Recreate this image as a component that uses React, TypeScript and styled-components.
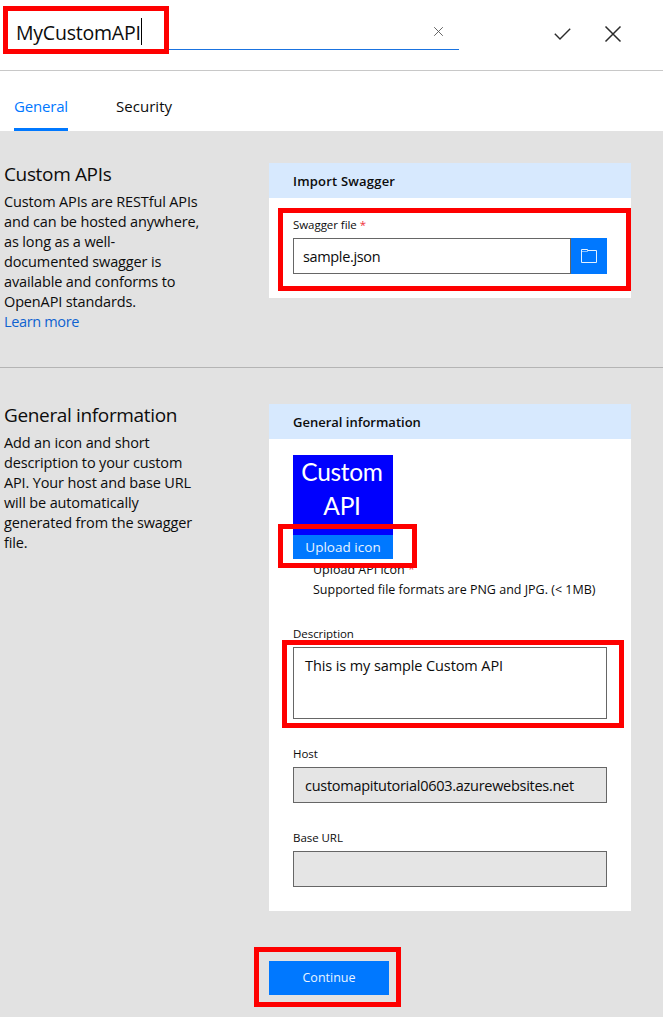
import React from 'react';
import styled, { createGlobalStyle } from 'styled-components';

const BLUE = '#0078ff';
const GRAY = '#e2e2e2';

const GlobalStyle = createGlobalStyle`
  * { box-sizing: border-box; }
  body {
    margin: 0;
    background: ${GRAY};
    color: #0c0c0c;
    font-family: "Open Sans", "Noto Sans", sans-serif;
    font-size: 14.5px;
  }
  h2, h3, p { margin: 0; font-weight: 400; }
  button, input, textarea { font: inherit; color: inherit; border-radius: 0; outline: none; }
`;

const Page = styled.div`
  width: 663px;
  height: 1017px;
  overflow: hidden;
  background: ${GRAY};
`;

const TopBar = styled.header`
  display: flex;
  align-items: flex-start;
  height: 71px;
  background: #fff;
  border-bottom: 1px solid #c8c8c8;
`;

const Highlight = styled.div<{ $top: number; $left: number; $width: number; $height: number }>`
  position: absolute;
  top: ${(p) => p.$top}px;
  left: ${(p) => p.$left}px;
  width: ${(p) => p.$width}px;
  height: ${(p) => p.$height}px;
  border: 5px solid #fe0000;
  pointer-events: none;
`;

const NameField = styled.div`
  position: relative;
  display: flex;
  align-items: center;
  width: 445px;
  height: 50px;
  margin-left: 14px;
  padding: 13px 14px 0 2px;
  border-bottom: 1px solid #1a73e0;
`;

const NameText = styled.span`
  padding-top: 3px;
  font-size: 19.5px;
  line-height: 28px;
  letter-spacing: -0.22px;
`;

const Caret = styled.span`
  width: 1px;
  height: 27px;
  margin-left: 0;
  background: #000;
`;

const ClearIcon = styled.svg`
  margin-left: auto;
  width: 13px;
  height: 13px;
`;

const BarActions = styled.div`
  display: flex;
  align-items: center;
  gap: 33px;
  margin: 24px 0 0 94px;
  height: 20px;
`;

const Tabs = styled.nav`
  display: flex;
  gap: 48px;
  height: 60px;
  padding-left: 14px;
  background: #fff;
`;

const Tab = styled.a<{ $active?: boolean }>`
  height: 60px;
  padding-top: 25px;
  line-height: 21px;
  font-size: 15px;
  letter-spacing: ${(p) => (p.$active ? '-0.18px' : '0.05px')};
  color: ${(p) => (p.$active ? BLUE : '#0c0c0c')};
  border-bottom: 3px solid ${(p) => (p.$active ? BLUE : 'transparent')};
`;

const Section = styled.section<{ $height: number; $top: number; $divider?: boolean }>`
  display: flex;
  align-items: flex-start;
  height: ${(p) => p.$height}px;
  padding-top: ${(p) => p.$top}px;
  border-bottom: ${(p) => (p.$divider ? '1px solid #b4b4b4' : '0')};
`;

const Intro = styled.div`
  width: 265px;
  margin: -1px 0 0 4px;
  flex: none;
  white-space: nowrap;
`;

const IntroTitle = styled.h2`
  font-size: 19px;
  line-height: 24px;
  letter-spacing: -0.35px;
`;

const IntroText = styled.p`
  margin-top: 6px;
  line-height: 20px;
  letter-spacing: -0.14px;
`;

const Link = styled.a`
  color: #0f62d0;
  letter-spacing: -0.35px;
`;

const Card = styled.div<{ $height: number }>`
  position: relative;
  width: 362px;
  height: ${(p) => p.$height}px;
  background: #fff;
`;

const CardHeader = styled.h3<{ $spacing?: number }>`
  height: 35px;
  padding: 0 24px;
  background: #d7e9fe;
  font-size: 13px;
  font-weight: 600;
  line-height: 36px;
  letter-spacing: ${(p) => p.$spacing ?? 0}px;
`;

const Field = styled.div<{ $top: number }>`
  margin: ${(p) => p.$top}px 24px 0;
`;

const Label = styled.label`
  display: block;
  height: 22px;
  line-height: 18px;
  font-size: 11.5px;
  letter-spacing: -0.05px;
  white-space: nowrap;
`;

const Required = styled.span`
  color: #f0303c;
`;

const FileRow = styled.div`
  display: flex;
`;

const TextInput = styled.input`
  display: block;
  width: 100%;
  min-width: 0;
  height: 36px;
  padding: 0 9px;
  border: 1px solid #666;
  background: #fff;
  letter-spacing: -0.35px;

  &:disabled {
    background: #e5e5e5;
    padding-left: 11px;
    letter-spacing: -0.28px;
    -webkit-text-fill-color: #0c0c0c;
  }
`;

const FileInput = styled(TextInput)`
  width: 278px;
  flex: none;
`;

const BrowseButton = styled.button`
  display: flex;
  align-items: center;
  justify-content: center;
  width: 36px;
  height: 36px;
  padding: 0;
  border: 0;
  background: ${BLUE};
`;

const IconPreview = styled.div`
  width: 100px;
  height: 80px;
  margin: 16px 0 0 24px;
  padding-right: 2px;
  background: #0000fe;
  color: #fff;
  font-family: Lato, sans-serif;
  font-size: 24.5px;
  line-height: 34px;
  letter-spacing: -0.3px;
  text-align: center;
`;

const UploadButton = styled.button`
  display: block;
  width: 100px;
  height: 24px;
  margin-left: 24px;
  padding: 0;
  border: 0;
  background: ${BLUE};
  color: #eaf4ff;
  font-size: 13.5px;
  line-height: 24px;
  letter-spacing: 0.02px;
`;

const Hints = styled.div`
  margin: 1px 0 0 44px;
  font-size: 12.5px;
  line-height: 20px;
  white-space: nowrap;
`;

const TextArea = styled.textarea`
  display: block;
  width: 314px;
  height: 72px;
  padding: 8px 11px;
  border: 1px solid #666;
  background: #fff;
  resize: none;
  line-height: 20px;
  letter-spacing: -0.1px;
`;

const Footer = styled.footer`
  position: relative;
  padding: 50px 0 0 269px;
`;

const ContinueButton = styled.button`
  display: block;
  width: 120px;
  height: 34px;
  padding: 0 0 2px;
  border: 0;
  background: ${BLUE};
  color: #eaf4ff;
  font-size: 12.5px;
`;

export default function App() {
  return (
    <Page>
      <GlobalStyle />
      <TopBar>
        <NameField>
          <NameText>MyCustomAPI</NameText>
          <Caret />
          <ClearIcon viewBox="0 0 13 13" stroke="#555" strokeWidth="0.9" fill="none">
            <path d="M2.2 2.2l8.6 8.6M10.8 2.2l-8.6 8.6" />
          </ClearIcon>
          <Highlight $top={6} $left={-11} $width={166} $height={48} />
        </NameField>
        <BarActions>
          <svg width="18" height="20" viewBox="0 0 18 20" stroke="#2b2b2b" strokeWidth="1.4" fill="none">
            <path d="M1.8 9.8l5.2 5.2L17.2 4.8" />
          </svg>
          <svg width="18" height="20" viewBox="0 0 18 20" stroke="#2b2b2b" strokeWidth="1.5" fill="none">
            <path d="M1.5 2.5l15 15M16.5 2.5l-15 15" />
          </svg>
        </BarActions>
      </TopBar>
      <Tabs>
        <Tab $active>General</Tab>
        <Tab>Security</Tab>
      </Tabs>

      <Section $height={237} $top={32} $divider>
        <Intro>
          <IntroTitle>Custom APIs</IntroTitle>
          <IntroText>
            Custom APIs are RESTful APIs<br />
            and can be hosted anywhere,<br />
            as long as a well-<br />
            documented swagger is<br />
            available and conforms to<br />
            OpenAPI standards.<br />
            <Link>Learn more</Link>
          </IntroText>
        </Intro>
        <Card $height={135}>
          <CardHeader $spacing={0.2}>Import Swagger</CardHeader>
          <Field $top={18}>
            <Label>Swagger file <Required>*</Required></Label>
            <FileRow>
              <FileInput defaultValue="sample.json" />
              <BrowseButton aria-label="Browse">
                <svg width="16" height="16" viewBox="0 0 16 16" fill="none" stroke="#e6f2ff">
                  <path d="M0.5 14.5V1.5H6.5V2.5H15.5V14.5Z" />
                  <path d="M0.5 3.5H6.5V2.5" strokeOpacity="0.6" />
                </svg>
              </BrowseButton>
            </FileRow>
          </Field>
          <Highlight $top={45} $left={9} $width={353} $height={83} />
        </Card>
      </Section>

      <Section $height={543} $top={36}>
        <Intro>
          <IntroTitle>General information</IntroTitle>
          <IntroText>
            Add an icon and short<br />
            description to your custom<br />
            API. Your host and base URL<br />
            will be automatically<br />
            generated from the swagger<br />
            file.
          </IntroText>
        </Intro>
        <Card $height={507}>
          <CardHeader>General information</CardHeader>
          <IconPreview>
            Custom<br />API
          </IconPreview>
          <UploadButton>Upload icon</UploadButton>
          <Hints>
            <div>Upload API icon <Required>*</Required></div>
            <div>Supported file formats are PNG and JPG. (&lt; 1MB)</div>
          </Hints>
          <Field $top={25}>
            <Label>Description</Label>
            <TextArea defaultValue="This is my sample Custom API" />
          </Field>
          <Field $top={26}>
            <Label>Host</Label>
            <TextInput disabled defaultValue="customapitutorial0603.azurewebsites.net" />
          </Field>
          <Field $top={26}>
            <Label>Base URL</Label>
            <TextInput disabled defaultValue="" />
          </Field>
          <Highlight $top={120} $left={9} $width={139} $height={44} />
          <Highlight $top={236} $left={13} $width={342} $height={88} />
        </Card>
      </Section>

      <Footer>
        <ContinueButton>Continue</ContinueButton>
        <Highlight $top={36} $left={254} $width={147} $height={60} />
      </Footer>
    </Page>
  );
}
